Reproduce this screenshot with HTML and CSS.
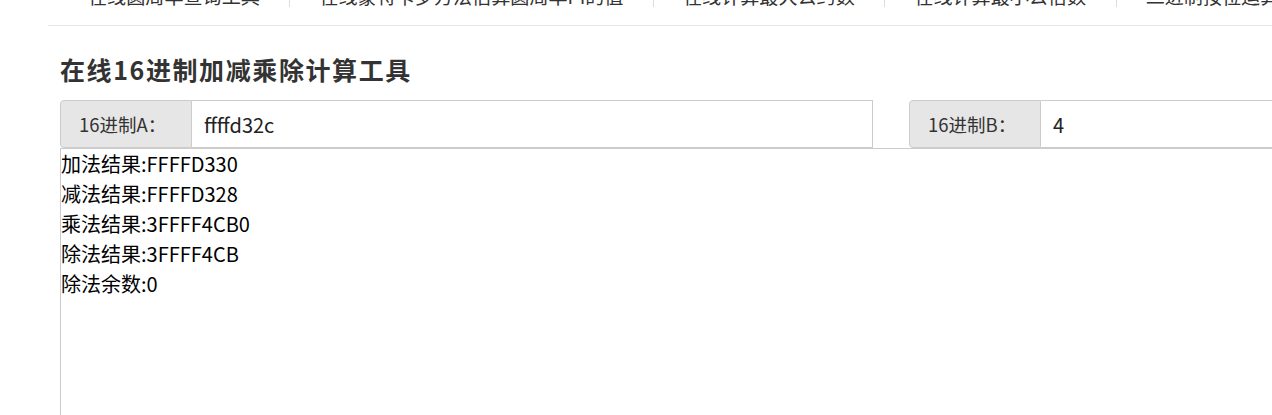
FILE: index.html
```html
<!DOCTYPE html>
<html lang="zh-CN">
<head>
<meta charset="utf-8">
<title>在线16进制加减乘除计算工具</title>
<link rel="stylesheet" href="styles.css">
</head>
<body>
<div class="page">
  <nav class="topnav">
    <a class="nav-item">在线圆周率查询工具</a>
    <a class="nav-item">在线蒙特卡罗方法估算圆周率PI的值</a>
    <a class="nav-item">在线计算最大公约数</a>
    <a class="nav-item">在线计算最小公倍数</a>
    <a class="nav-item">二进制按位运算工具</a>
  </nav>
  <div class="content">
    <h1 class="title">在线16进制加减乘除计算工具</h1>
    <div class="inputs">
      <div class="group">
        <span class="addon">16进制A：</span>
        <input class="field" type="text" value="ffffd32c">
      </div>
      <div class="group">
        <span class="addon">16进制B：</span>
        <input class="field" type="text" value="4">
      </div>
    </div>
    <div class="result">
      <div>加法结果:FFFFD330</div>
      <div>减法结果:FFFFD328</div>
      <div>乘法结果:3FFFF4CB0</div>
      <div>除法结果:3FFFF4CB</div>
      <div>除法余数:0</div>
    </div>
  </div>
</div>
</body>
</html>
```
FILE: styles.css
```css
html, body {
  margin: 0;
  padding: 0;
  background: #fff;
  overflow: hidden;
}
body {
  font-family: "Noto Sans CJK SC", "Noto Sans", sans-serif;
  color: #333;
}
.page {
  width: 1800px;
  padding-left: 48px;
}
.topnav {
  display: flex;
  margin-top: -14px;
  padding: 0 0 18px 11px;
  border-bottom: 1px solid #e8e8e8;
}
.nav-item {
  display: block;
  font-size: 19.1px;
  line-height: 21px;
  height: 21px;
  padding: 0 29.5px 0 29px;
  color: #333;
  white-space: nowrap;
}
.nav-item + .nav-item {
  border-left: 1px solid #ddd;
}
.content {
  padding-left: 12px;
}
.title {
  margin: 29px 0 17px;
  font-size: 25px;
  line-height: 28px;
  font-weight: 700;
  letter-spacing: 1.6px;
  color: #333;
}
.inputs {
  display: flex;
  gap: 36px;
  width: 1662px;
}
.group {
  display: flex;
  flex: 1;
  height: 48px;
}
.addon {
  box-sizing: border-box;
  width: 132px;
  flex: none;
  display: flex;
  align-items: center;
  padding-left: 18px;
  font-size: 18.5px;
  color: #333;
  background: #e6e6e6;
  border: 1px solid #ccc;
  border-radius: 4px 0 0 4px;
}
.field {
  box-sizing: border-box;
  flex: 1;
  min-width: 0;
  height: 48px;
  margin: 0;
  padding: 0 12px;
  font-family: "Noto Sans CJK SC", "Noto Sans", sans-serif;
  font-size: 20px;
  color: #222;
  border: 1px solid #ccc;
  border-left: none;
  border-radius: 0;
  outline: none;
  background: #fff;
}
.result {
  box-sizing: border-box;
  width: 1662px;
  height: 400px;
  border: 1px solid #ccc;
  font-size: 20px;
  line-height: 30px;
  color: #000;
}
```
